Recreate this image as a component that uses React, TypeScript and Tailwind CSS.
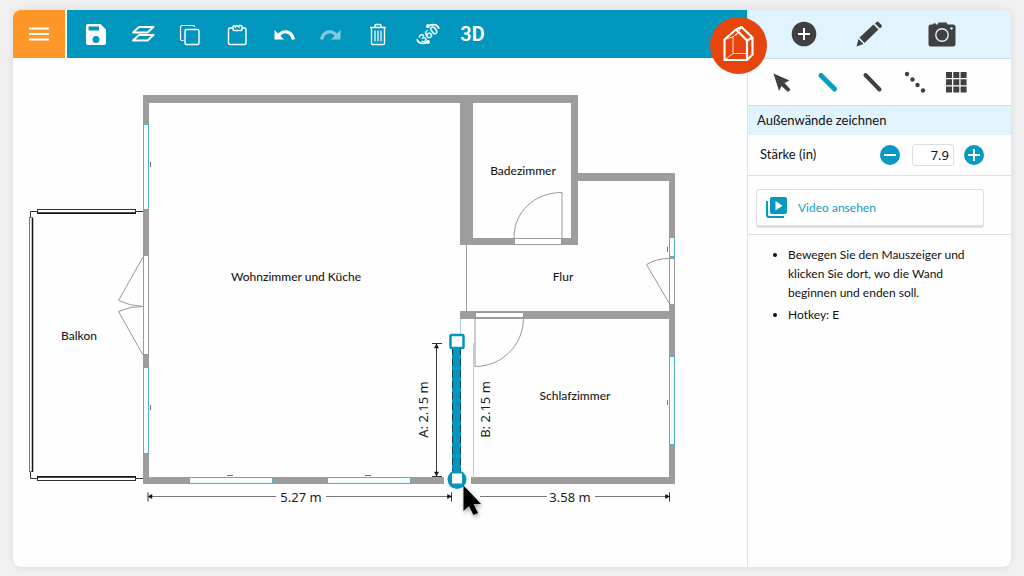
import type { ReactNode } from 'react';

function Icon({ children, className = '' }: { children: ReactNode; className?: string }) {
  return (
    <svg viewBox="0 0 28 28" fill="none" className={`h-7 w-7 ${className}`} aria-hidden="true">
      {children}
    </svg>
  );
}

const tools = [
  {
    label: 'Speichern',
    icon: (
      <Icon>
        <path
          fill="currentColor"
          fillRule="evenodd"
          d="M6 4h12.5L24 9.5V23a2 2 0 0 1-2 2H6a2 2 0 0 1-2-2V6a2 2 0 0 1 2-2Zm.5 2.5v4h10.5v-4ZM14 16a3.500 3.500 0 1 0 0 7a3.500 3.500 0 0 0 0-7Z"
        />
      </Icon>
    ),
  },
  {
    label: 'Ebenen',
    icon: (
      <Icon>
        <path d="M10 7h14.500l-6 5.500H4ZM10 15h14.500l-6 5.500H4Z" stroke="currentColor" strokeWidth="1.9" strokeLinejoin="round" />
      </Icon>
    ),
  },
  {
    label: 'Kopieren',
    icon: (
      <Icon>
        <path d="M7.500 20.500H6a1.500 1.500 0 0 1-1.500-1.500V7A1.500 1.500 0 0 1 6 5.500h11A1.500 1.500 0 0 1 18.500 7" stroke="currentColor" strokeWidth="1.2" />
        <rect x="9" y="9.500" width="14" height="15" rx="1.500" stroke="currentColor" strokeWidth="1.4" />
      </Icon>
    ),
  },
  {
    label: 'Einfügen',
    icon: (
      <Icon>
        <path d="M9.500 8H7a1.500 1.500 0 0 0-1.500 1.500v13.500A1.500 1.500 0 0 0 7 24.500h14.500a1.500 1.500 0 0 0 1.500-1.500V9.500A1.500 1.500 0 0 0 21.500 8H19" stroke="currentColor" strokeWidth="1.4" />
        <path d="M10 6v3.500a1 1 0 0 0 1 1h7a1 1 0 0 0 1-1V6.500a1 1 0 0 0-1-1h-2M10 6h2.500M12.500 8a1.800 1.800 0 1 1 3.500 0" stroke="currentColor" strokeWidth="1.4" />
      </Icon>
    ),
  },
  {
    label: 'Rückgängig',
    icon: (
      <Icon>
        <path d="M4.500 10v9.500H14Z" fill="currentColor" />
        <path d="M8.500 15.500C13 10 21 10 23.500 19.500" stroke="currentColor" strokeWidth="3.2" />
      </Icon>
    ),
  },
  {
    label: 'Wiederholen',
    icon: (
      <Icon className="opacity-50">
        <path d="M23.500 10v9.500H14Z" fill="currentColor" />
        <path d="M19.500 15.500C15 10 7 10 4.500 19.500" stroke="currentColor" strokeWidth="3.2" />
      </Icon>
    ),
  },
  {
    label: 'Löschen',
    icon: (
      <Icon>
        <path d="M6 7.500h16M11 7V5.500a1 1 0 0 1 1-1h4a1 1 0 0 1 1 1V7M7.500 8v15.500a1 1 0 0 0 1 1h11a1 1 0 0 0 1-1V8" stroke="currentColor" strokeWidth="1.4" />
        <path d="M11 10.500v11M14 10.500v11M17 10.500v11" stroke="currentColor" strokeWidth="1.2" />
      </Icon>
    ),
  },
  {
    label: '360°-Ansicht',
    icon: (
      <Icon className="ml-[6px]">
        <g transform="rotate(-35 14 14)">
          <text x="14" y="18.500" textAnchor="middle" fill="currentColor" fontSize="12" fontWeight="500" fontFamily="Roboto, sans-serif">
            360
          </text>
          <path d="M2 12c-1.500 4 1 7 7 8.500M26 16c1.500-4-1-7-7-8.500" stroke="currentColor" strokeWidth="1.6" />
          <circle cx="9.500" cy="20.500" r="1.900" fill="currentColor" />
          <circle cx="18.500" cy="7.500" r="1.900" fill="currentColor" />
        </g>
      </Icon>
    ),
  },
  { label: '3D', icon: <span className="ml-[2px] font-[Roboto,sans-serif] text-xl font-semibold">3D</span> },
];

const wallTools = [
  {
    label: 'Auswählen',
    icon: (
      <Icon>
        <path d="m5.500 5.500 16 7-5 2.500 6 6.500-2.500 2.500-6.500-6-2.500 5Z" fill="currentColor" />
      </Icon>
    ),
  },
  {
    label: 'Außenwände',
    icon: (
      <Icon className="text-[#069ec5]">
        <path d="m9 7.500 13.500 13.500" stroke="currentColor" strokeWidth="5" strokeLinecap="round" />
      </Icon>
    ),
  },
  {
    label: 'Innenwände',
    icon: (
      <Icon>
        <path d="m9.500 7 14 14.500" stroke="currentColor" strokeWidth="4" strokeLinecap="round" />
      </Icon>
    ),
  },
  {
    label: 'Hilfslinien',
    icon: (
      <Icon>
        <g fill="currentColor">
          <circle cx="7" cy="6" r="2.200" />
          <circle cx="12.500" cy="11.500" r="2.200" />
          <circle cx="17.500" cy="17" r="2.200" />
          <circle cx="23" cy="22.500" r="2.200" />
        </g>
      </Icon>
    ),
  },
  {
    label: 'Raster',
    icon: (
      <Icon>
        <path
          fill="currentColor"
          d="M2 4h6v6H2zM9.300 4h6v6h-6zM16.600 4h6v6h-6zM2 11.300h6v6H2zM9.300 11.300h6v6h-6zM16.600 11.300h6v6h-6zM2 18.600h6v6H2zM9.300 18.600h6v6h-6zM16.600 18.600h6v6h-6z"
        />
      </Icon>
    ),
  },
];

function Logo() {
  return (
    <svg viewBox="0 0 57 57" fill="none" className="h-full w-full" aria-hidden="true">
      <g stroke="#fff" strokeLinejoin="round" strokeLinecap="round">
        <path d="M14.500 43V22.500L26 12.500 31.500 10 42.500 20.500V37.500L37 43ZM26 12.500 37 23.500V43M37 23.500 42.500 20.500" strokeWidth="2.200" />
        <path d="M31.500 10 26 18.500M23 20v16.500h14M23 36.500 14.500 43M14.500 22.500 23 20 30 13" strokeWidth="1" opacity=".8" />
      </g>
    </svg>
  );
}

// x, y, width, height
const walls = [
  [143, 95, 435, 8],
  [143, 95, 6, 389],
  [460, 95, 13, 150],
  [571, 95, 7, 150],
  [460, 238, 118, 7],
  [578, 173, 97, 8],
  [669, 173, 6, 311],
  [460, 311, 215, 8],
  [143, 477, 301, 7],
  [471, 477, 204, 7],
];

const windows = [
  [143, 124, 6, 86],
  [143, 367, 6, 87],
  [189, 477, 84, 7],
  [327, 477, 84, 7],
  [669, 237, 6, 20],
  [669, 356, 6, 89],
];

const doors = [
  [143, 255, 6, 100],
  [514, 238, 48, 7],
  [669, 258, 6, 47],
  [475, 312, 49, 6],
];

const rooms = [
  { name: 'Badezimmer', x: 523, y: 175 },
  { name: 'Wohnzimmer und Küche', x: 296, y: 281 },
  { name: 'Flur', x: 563, y: 281 },
  { name: 'Balkon', x: 79, y: 340 },
  { name: 'Schlafzimmer', x: 575, y: 400 },
];

function FloorPlan() {
  return (
    <svg
      viewBox="13 58 733 509"
      preserveAspectRatio="xMinYMin meet"
      className="h-full w-full"
      fontFamily="'Noto Sans', sans-serif"
      fontSize="13"
    >
      <g fill="#9d9d9d">
        {walls.map(([x, y, w, h]) => (
          <rect key={`${x}-${y}-${w}`} x={x} y={y} width={w} height={h} />
        ))}
      </g>
      <g fill="#f4fcff" stroke="#58abc9">
        {windows.map(([x, y, w, h]) => (
          <rect key={`${x}-${y}`} x={x + 0.5} y={y + 0.5} width={w - 1} height={h - 1} />
        ))}
      </g>
      <g fill="#fff" stroke="#999">
        {doors.map(([x, y, w, h]) => (
          <rect key={`${x}-${y}`} x={x + 0.5} y={y + 0.5} width={w - 1} height={h - 1} />
        ))}
      </g>

      <g fill="none" stroke="#999">
        <path d="M143 257 118.500 300.500Q130 306 143 306.500M143 306.500Q130 306 118.500 311.500L143 355" />
        <path d="M514 238C514 212 534 192.500 562 192.500V238" />
        <path d="M669 303 646.500 264.500Q656 258.500 669 258.500" />
        <path d="M475 318V366.500C502 366.500 523.500 345 523.500 318" />
        <path d="M466.500 245V311" />
        <path d="M460.500 319V334M473.500 343V478" stroke="#a9d3ea" />
        <path d="M150.500 162v5M150.500 405v5M227 475.500h6M365 475.500h6M667.500 247v5M667.500 400v5" stroke="#777" />
      </g>

      {/* balcony railing */}
      <g fill="#fff" stroke="#333">
        <path d="M37 211.500H30.500V218M135 211.500H143M30.500 472V478.500H37M135 478.500H143" fill="none" />
        <rect x="37.500" y="209.500" width="98" height="4" />
        <rect x="37.500" y="476.500" width="98" height="4" />
        <rect x="29.500" y="217.500" width="3" height="254" stroke="#777" />
        <path d="M37 213H136M37 477H136M32.500 218V472" stroke="#111" strokeWidth="1.5" />
      </g>

      <g fill="#1c1c1c">
        <g fontFamily="Lato, sans-serif" fontSize="12" fontWeight="500">
          {rooms.map((room) => (
            <text key={room.name} x={room.x} y={room.y} textAnchor="middle">
              {room.name}
            </text>
          ))}
        </g>
        <text x="301" y="502" textAnchor="middle">5.27 m</text>
        <text x="570" y="502" textAnchor="middle">3.58 m</text>
        <text transform="translate(428 409.500) rotate(-90)" textAnchor="middle">A: 2.15 m</text>
        <text transform="translate(490 409.500) rotate(-90)" textAnchor="middle">B: 2.15 m</text>
      </g>

      {/* dimension lines */}
      <g stroke="#777">
        <path d="M149 496.500H276M326 496.500H451M480 496.500H547M595 496.500H669" />
        <path d="M148 492.500v9M451.500 492.500v9M669.500 492.500v9M432 343.500h10M432 476.500h10M436.500 344v132" stroke="#333" />
      </g>
      <path
        d="m148 496.500 4-2v4ZM451.500 496.500l-4-2v4ZM669.500 496.500l-4-2v4ZM436.500 344l-2 4h4ZM436.500 476l-2-4h4Z"
        fill="#111"
        stroke="#111"
        strokeWidth=".5"
      />

      {/* wall being drawn */}
      <rect x="452" y="346" width="9" height="130" fill="#0695bd" />
      <path d="M452.500 348V472M460.500 348V472" stroke="#17404e" strokeDasharray="7 4" />
      <circle cx="457" cy="479.500" r="9.500" fill="#0695bd" />
      <rect x="450.500" y="335" width="13" height="13" rx="1" fill="#fff" stroke="#0695bd" strokeWidth="2.5" />
      <rect x="452" y="473.500" width="10" height="10" fill="#fff" />
      <path
        d="M463.500 485.500V511l5.500-5 4.500 9 4.500-2-4.500-9h7.500Z"
        fill="#000"
        className="drop-shadow-[1px_2px_2px_rgba(0,0,0,0.4)]"
      />
    </svg>
  );
}

function Sidebar() {
  return (
    <aside className="w-[264px] shrink-0 border-l border-[#d9e2e6] font-[Lato,sans-serif] text-[13px] text-[#111]">
      <div className="flex h-[49px] items-center rounded-tr-lg border-b border-[#cbdde5] bg-[#e1f3fd] pl-[23px] text-[#3f4041]">
        <button aria-label="Hinzufügen" className="flex w-[65px] justify-center">
          <Icon>
            <circle cx="14" cy="14" r="12.300" fill="currentColor" />
            <path d="M14 8v12M8 14h12" stroke="#fff" strokeWidth="2" />
          </Icon>
        </button>
        <button aria-label="Zeichnen" className="flex w-[65px] justify-center">
          <Icon>
            <path d="m1.500 26.500 2-7.500 5 5ZM4.500 17.500 18.500 4.500l5 5L9.500 23ZM20 3.500l1.500-1.500q1-.800 2 0l3 3q.800 1 0 2L25 8.500Z" fill="currentColor" />
          </Icon>
        </button>
        <button aria-label="Kamera" className="ml-2 flex w-[65px] justify-center">
          <Icon>
            <path d="M3 4.500h2V3.500h3v1h1.500l1-2h8l1 2H25a2.500 2.500 0 0 1 2.500 2.500v17A2.500 2.500 0 0 1 25 26.500H3A2.500 2.500 0 0 1 .5 24V7A2.500 2.500 0 0 1 3 4.500Z" fill="currentColor" />
            <circle cx="14" cy="15" r="6.200" stroke="#e1f3fd" strokeWidth="1.400" />
            <circle cx="23.500" cy="8.500" r="1.200" fill="#e1f3fd" />
          </Icon>
        </button>
      </div>

      <div className="flex h-[47px] items-center border-b border-[#cfdde3] pl-3 text-[#3f4041]">
        {wallTools.map((tool) => (
          <button key={tool.label} aria-label={tool.label} className="flex w-11 justify-center">
            {tool.icon}
          </button>
        ))}
      </div>

      <h2 className="h-[29px] bg-[#e1f3fd] pl-[9px] leading-[29px]">Außenwände zeichnen</h2>

      <div className="flex h-[41px] items-center border-b border-[#dedede] pr-[27px] pl-3">
        <label htmlFor="strength" className="flex-1">
          Stärke (in)
        </label>
        <button aria-label="Verringern" className="flex h-5 w-5 items-center justify-center rounded-full bg-[#069ac0]">
          <span className="h-0.5 w-3 bg-white" />
        </button>
        <input
          id="strength"
          defaultValue="7.9"
          className="mr-[10px] ml-3 h-[22px] w-[42px] rounded-[3px] border border-[#dedede] bg-white pr-1 text-right font-['Noto_Sans',sans-serif]"
        />
        <button aria-label="Erhöhen" className="flex h-5 w-5 items-center justify-center rounded-full bg-[#069ac0]">
          <svg viewBox="0 0 12 12" className="h-3 w-3" stroke="#fff" strokeWidth="2" aria-hidden="true">
            <path d="M6 0v12M0 6h12" />
          </svg>
        </button>
      </div>

      <div className="border-b border-[#dedede] pt-[13px] pr-[27px] pb-[6px] pl-2">
        <button className="flex h-[39px] w-full items-center gap-[11px] rounded-[3px] border border-b-[3px] border-[#dfdfdf] pl-[9px] text-xs text-[#109cc2]">
          <svg viewBox="0 0 21 21" className="h-[21px] w-[21px]" aria-hidden="true">
            <rect x="4" y="0" width="17" height="17" rx="2" fill="#069ac0" />
            <path d="M1 4v14a2 2 0 0 0 2 2h15" fill="none" stroke="#069ac0" strokeWidth="2" />
            <path d="M9.500 4v9.500l7-4.750Z" fill="#fff" />
          </svg>
          Video ansehen
        </button>
      </div>

      <ul className="list-disc space-y-[3px] pt-[10px] pr-8 pl-10 text-xs leading-[19px]">
        <li>Bewegen Sie den Mauszeiger und klicken Sie dort, wo die Wand beginnen und enden soll.</li>
        <li>Hotkey: E</li>
      </ul>
    </aside>
  );
}

export default function App() {
  return (
    <div className="h-screen bg-[#f1f1f1] px-[13px] pt-[10px] pb-[9px]">
      <div className="flex h-full rounded-lg bg-[#fefefe] shadow-[0_0_8px_rgba(0,0,0,0.1)]">
        <main className="relative flex min-w-0 flex-1 flex-col">
          <header className="flex h-12 shrink-0 gap-0.5">
            <button aria-label="Menü" className="flex w-[52px] items-center justify-center rounded-tl-lg bg-[#fd9727] text-white">
              <svg viewBox="0 0 20 14" className="h-[14px] w-5" stroke="currentColor" strokeWidth="1.8" aria-hidden="true">
                <path d="M0 1.500h20M0 7h20M0 12.500h20" />
              </svg>
            </button>
            <nav className="flex flex-1 items-center bg-[#0096bd] pl-[5px] text-white">
              {tools.map((tool) => (
                <button key={tool.label} aria-label={tool.label} className="flex w-[47px] justify-center">
                  {tool.icon}
                </button>
              ))}
            </nav>
          </header>
          <div className="min-h-0 flex-1">
            <FloorPlan />
          </div>
          <div className="absolute top-[7px] -right-5 h-[57px] w-[57px] rounded-full bg-[#e5450d]">
            <Logo />
          </div>
        </main>
        <Sidebar />
      </div>
    </div>
  );
}
